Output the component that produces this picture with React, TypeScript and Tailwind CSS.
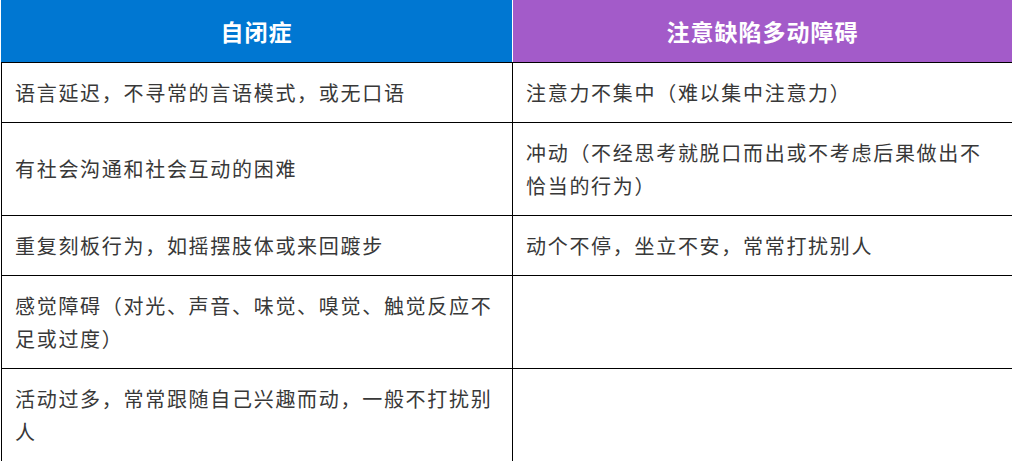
const rows: { left: string; right: string; tall?: boolean }[] = [
  { left: "语言延迟，不寻常的言语模式，或无口语", right: "注意力不集中（难以集中注意力）" },
  { left: "有社会沟通和社会互动的困难", right: "冲动（不经思考就脱口而出或不考虑后果做出不恰当的行为）", tall: true },
  { left: "重复刻板行为，如摇摆肢体或来回踱步", right: "动个不停，坐立不安，常常打扰别人" },
  { left: "感觉障碍（对光、声音、味觉、嗅觉、触觉反应不足或过度）", right: "", tall: true },
  { left: "活动过多，常常跟随自己兴趣而动，一般不打扰别人", right: "", tall: true },
];

const cellText =
  "flex items-center text-[20px] leading-[32.5px] tracking-[1.7px] text-[#383838] px-[13px] pt-[14px] pb-[13px]";

export default function App() {
  return (
    <div
      className="w-[1012px] h-[461px] overflow-hidden bg-white pl-[1px]"
      style={{ fontFamily: '"Noto Sans CJK SC", "Noto Sans", sans-serif' }}
    >
      <div className="flex h-[63px] border-b border-black">
        <div className="w-[512px] shrink-0 border-r border-white bg-[#0077d2] flex items-center justify-center">
          <span className="text-[23px] font-bold tracking-[1px] text-white">自闭症</span>
        </div>
        <div className="w-[499px] shrink-0 bg-[#a35bc9] flex items-center justify-center">
          <span className="text-[23px] font-bold tracking-[1px] text-white">注意缺陷多动障碍</span>
        </div>
      </div>
      {rows.map((row, i) => (
        <div key={i} className={`flex border-b border-black ${row.tall ? "min-h-[93px]" : "h-[60px]"}`}>
          <div className={`w-[512px] shrink-0 border-l border-r border-black ${cellText}`}>
            <span>{row.left}</span>
          </div>
          <div className={`w-[499px] shrink-0 ${cellText}`}>
            <span>{row.right}</span>
          </div>
        </div>
      ))}
    </div>
  );
}
